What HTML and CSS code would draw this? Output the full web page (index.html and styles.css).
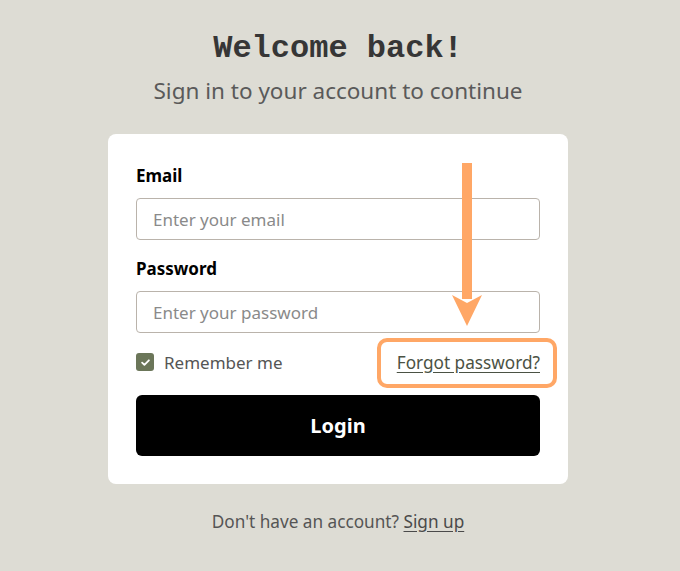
FILE: index.html
```html
<!DOCTYPE html>
<html lang="en">
<head>
<meta charset="utf-8">
<title>Welcome back</title>
<link rel="stylesheet" href="styles.css">
</head>
<body>
<main class="page">
  <h1 class="title">Welcome back!</h1>
  <p class="subtitle">Sign in to your account to continue</p>
  <form class="card">
    <div class="field">
      <label class="label" for="email">Email</label>
      <input class="input" id="email" type="email" placeholder="Enter your email">
    </div>
    <div class="field">
      <label class="label" for="password">Password</label>
      <input class="input" id="password" type="password" placeholder="Enter your password">
    </div>
    <div class="row">
      <label class="remember">
        <span class="check">
          <svg viewBox="0 0 12 12" width="11" height="11"><path d="M2.3 6.2 L4.8 8.6 L9.7 3.6" fill="none" stroke="#fff" stroke-width="2" stroke-linecap="round" stroke-linejoin="round"/></svg>
        </span>
        Remember me
      </label>
      <a class="forgot" href="#">Forgot password?</a>
    </div>
    <button class="btn" type="button">Login</button>
    <div class="highlight"></div>
    <svg class="arrow" viewBox="0 0 30 164" width="30" height="164">
      <rect x="10" y="1" width="10" height="136" fill="#ffa766"/>
      <polygon points="0,133 15,141 30,133 15,164" fill="#ffa766"/>
    </svg>
  </form>
  <p class="footer">Don't have an account? <a class="signup" href="#">Sign up</a></p>
</main>
</body>
</html>
```

FILE: styles.css
```css
html, body {
  margin: 0;
  padding: 0;
}
body {
  background: #dddcd4;
  font-family: "Noto Sans", "Open Sans", sans-serif;
  color: #333;
}
.page {
  display: flex;
  flex-direction: column;
  align-items: center;
  padding-top: 29px;
  padding-right: 4px;
}
.title {
  margin: 0;
  font-family: "Liberation Mono", "DejaVu Sans Mono", monospace;
  font-weight: 700;
  font-size: 32px;
  line-height: 40px;
  color: #363636;
}
.subtitle {
  margin: 7px 0 0;
  font-size: 22.5px;
  line-height: 30px;
  color: #5a5a5a;
}
.card {
  position: relative;
  margin-top: 28px;
  width: 460px;
  box-sizing: border-box;
  padding: 30px 28px 28px;
  background: #fff;
  border-radius: 8px;
  display: flex;
  flex-direction: column;
}
.field {
  display: flex;
  flex-direction: column;
  margin-bottom: 17px;
}
.label {
  font-weight: 700;
  font-size: 17px;
  line-height: 24px;
  color: #000;
  margin-bottom: 10px;
}
.input {
  height: 42px;
  box-sizing: border-box;
  border: 1px solid #bab3ab;
  border-radius: 4px;
  padding: 0 16px;
  font-family: inherit;
  font-size: 17px;
  color: #333;
  outline: none;
}
.input::placeholder {
  color: #8a8a8a;
}
.row {
  display: flex;
  justify-content: space-between;
  align-items: center;
  height: 22px;
  margin-top: 1px;
}
.remember {
  display: flex;
  align-items: center;
  gap: 10px;
  font-size: 17px;
  color: #555;
}
.check {
  width: 18px;
  height: 18px;
  border-radius: 3px;
  background: #6b7659;
  display: flex;
  align-items: center;
  justify-content: center;
}
.forgot {
  font-size: 17.2px;
  color: #4b5244;
  text-decoration: underline;
  text-underline-offset: 3px;
}
.btn {
  margin-top: 22px;
  height: 61px;
  border: none;
  border-radius: 6px;
  background: #000;
  color: #fff;
  font-family: inherit;
  font-weight: 700;
  font-size: 20px;
}
.highlight {
  position: absolute;
  left: 269px;
  top: 204px;
  width: 180px;
  height: 50px;
  box-sizing: border-box;
  border: 4px solid #ffa766;
  border-radius: 10px;
}
.arrow {
  position: absolute;
  left: 344px;
  top: 28px;
}
.footer {
  margin: 26px 0 0;
  font-size: 17.2px;
  color: #555;
}
.signup {
  color: #4a4a4a;
  text-decoration: underline;
  text-underline-offset: 3px;
}
```
